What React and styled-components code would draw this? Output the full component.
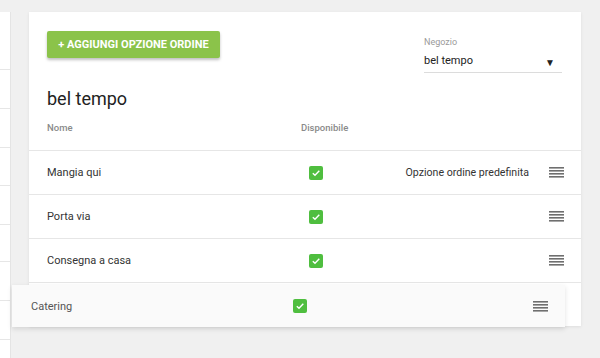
import React from 'react'
import styled, { createGlobalStyle } from 'styled-components'

const GlobalStyle = createGlobalStyle`
  html, body {
    margin: 0;
    padding: 0;
    background: #f0f0f0;
    font-family: Roboto, 'Liberation Sans', sans-serif;
  }
`

const options = [
  { name: 'Mangia qui', available: true, isDefault: true },
  { name: 'Porta via', available: true },
  { name: 'Consegna a casa', available: true }
]

const CheckIcon = () => (
  <svg width="10" height="10" viewBox="0 0 10 10">
    <path d="M1.8 5.2 L4 7.3 L8.3 2.8" fill="none" stroke="#fff" strokeWidth="1.4" />
  </svg>
)

const HandleIcon = () => (
  <svg width="15" height="11" viewBox="0 0 15 11">
    {[0, 3, 6, 9].map(y => (
      <rect key={y} x="0" y={y} width="15" height="1.6" fill="#6f6f6f" />
    ))}
  </svg>
)

const OptionRow = ({ name, available, isDefault, dragging }) => {
  const Wrapper = dragging ? DragRow : Row
  return (
    <Wrapper>
      <NameCell>{name}</NameCell>
      <AvailableCell>
        {available && (
          <Checkbox>
            <CheckIcon />
          </Checkbox>
        )}
      </AvailableCell>
      {isDefault && <DefaultLabel>Opzione ordine predefinita</DefaultLabel>}
      <Handle>
        <HandleIcon />
      </Handle>
    </Wrapper>
  )
}

const App = () => (
  <>
    <GlobalStyle />
    <Page>
      <Sidebar>
        {[57, 38, 38, 37, 38, 36, 38, 38].map((h, i) => (
          <SidebarRow key={i} height={h} />
        ))}
      </Sidebar>

      <Card>
        <TopBar>
          <AddButton>+ Aggiungi opzione ordine</AddButton>
          <Select>
            <SelectLabel>Negozio</SelectLabel>
            <SelectValue>
              <span>bel tempo</span>
              <Arrow>▼</Arrow>
            </SelectValue>
          </Select>
        </TopBar>

        <Title>bel tempo</Title>

        <HeaderRow>
          <NameCell>Nome</NameCell>
          <AvailableCell>Disponibile</AvailableCell>
        </HeaderRow>

        {options.map(o => (
          <OptionRow key={o.name} {...o} />
        ))}

        <Placeholder />
      </Card>

      <OptionRow name="Catering" available dragging />
    </Page>
  </>
)

const Page = styled.div`
  position: relative;
  display: flex;
  align-items: flex-start;
  height: 358px;
  padding-top: 12px;
  box-sizing: border-box;
  overflow: hidden;
`

const Sidebar = styled.div`
  width: 10px;
  align-self: stretch;
  background: #fff;
  border-right: 1px solid #e4e4e4;
`

const SidebarRow = styled.div`
  height: ${p => p.height}px;
  border-bottom: 1px solid #e6e6e6;
`

const Card = styled.div`
  margin-left: 18px;
  width: 552px;
  background: #fff;
  box-shadow: 0 1px 3px rgba(0, 0, 0, 0.08);
  padding-top: 19px;
`

const TopBar = styled.div`
  display: flex;
  justify-content: space-between;
  align-items: flex-start;
  padding: 0 19px 0 18px;
`

const AddButton = styled.button`
  height: 27px;
  width: 173px;
  padding: 0;
  border: none;
  border-radius: 2px;
  background: #8bc34a;
  color: #fff;
  font-family: Roboto, 'Liberation Sans', sans-serif;
  font-size: 11px;
  font-weight: 700;
  text-transform: uppercase;
  box-shadow: 0 2px 3px rgba(0, 0, 0, 0.25);
  cursor: pointer;
`

const Select = styled.div`
  width: 138px;
  margin-top: 5px;
`

const SelectLabel = styled.div`
  font-size: 9px;
  line-height: 12px;
  color: #9a9a9a;
`

const SelectValue = styled.div`
  display: flex;
  justify-content: space-between;
  align-items: center;
  height: 24px;
  padding-right: 7px;
  border-bottom: 1px solid #dcdcdc;
  font-size: 11px;
  color: #222;
`

const Arrow = styled.span`
  font-size: 10px;
  margin-top: 4px;
  color: #222;
`

const Title = styled.div`
  margin-top: 14px;
  padding-left: 18px;
  font-size: 18px;
  line-height: 24px;
  color: #222;
`

const Row = styled.div`
  display: flex;
  align-items: center;
  height: 43px;
  padding: 0 17px 0 18px;
  border-bottom: 1px solid #e6e6e6;
  font-size: 11px;
  color: #333;
`

const HeaderRow = styled(Row)`
  height: 28px;
  padding-top: 11px;
  align-items: flex-start;
  font-size: 9.5px;
  line-height: 12px;
  font-weight: 500;
  color: #8a8a8a;
`

const DragRow = styled(Row)`
  position: absolute;
  left: 12px;
  top: 285px;
  width: 553px;
  height: 42px;
  box-sizing: border-box;
  padding: 0 17px 0 19px;
  background: #fafafa;
  border-bottom: none;
  box-shadow: 0 2px 5px rgba(0, 0, 0, 0.12);
  color: #555;
`

const NameCell = styled.div`
  width: 254px;
  flex-shrink: 0;
`

const AvailableCell = styled.div`
  flex: 1;
  display: flex;
`

const Checkbox = styled.span`
  display: flex;
  align-items: center;
  justify-content: center;
  width: 14px;
  height: 14px;
  margin-left: 8px;
  border-radius: 2px;
  background: #4fbe3f;
`

const DefaultLabel = styled.div`
  margin-right: 20px;
  font-size: 10.6px;
  color: #333;
`

const Handle = styled.div`
  display: flex;
  width: 15px;
`

const Placeholder = styled.div`
  height: 43px;
`

export default App
